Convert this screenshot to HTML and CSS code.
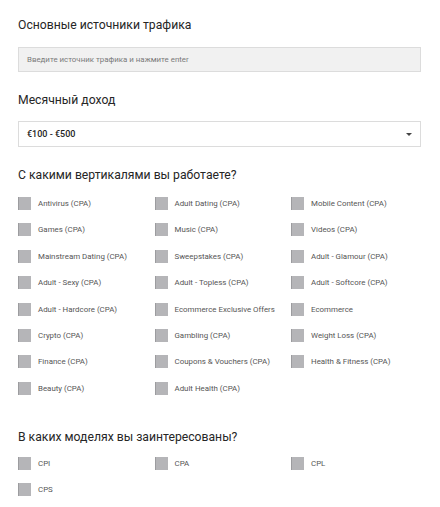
FILE: index.html
```html
<!DOCTYPE html>
<html lang="ru">
<head>
<meta charset="utf-8">
<link rel="stylesheet" href="styles.css">
</head>
<body>
<div class="form">
  <h2 class="title t1">Основные источники трафика</h2>
  <div class="input">Введите источник трафика и нажмите enter</div>

  <h2 class="title t2">Месячный доход</h2>
  <div class="select"><span>€100 - €500</span><span class="arrow"></span></div>

  <h2 class="title t3">С какими вертикалями вы работаете?</h2>
  <div class="grid">
    <label class="opt"><span class="box"></span>Antivirus (CPA)</label>
    <label class="opt"><span class="box"></span>Adult Dating (CPA)</label>
    <label class="opt"><span class="box"></span>Mobile Content (CPA)</label>
    <label class="opt"><span class="box"></span>Games (CPA)</label>
    <label class="opt"><span class="box"></span>Music (CPA)</label>
    <label class="opt"><span class="box"></span>Videos (CPA)</label>
    <label class="opt"><span class="box"></span>Mainstream Dating (CPA)</label>
    <label class="opt"><span class="box"></span>Sweepstakes (CPA)</label>
    <label class="opt"><span class="box"></span>Adult - Glamour (CPA)</label>
    <label class="opt"><span class="box"></span>Adult - Sexy (CPA)</label>
    <label class="opt"><span class="box"></span>Adult - Topless (CPA)</label>
    <label class="opt"><span class="box"></span>Adult - Softcore (CPA)</label>
    <label class="opt"><span class="box"></span>Adult - Hardcore (CPA)</label>
    <label class="opt"><span class="box"></span>Ecommerce Exclusive Offers</label>
    <label class="opt"><span class="box"></span>Ecommerce</label>
    <label class="opt"><span class="box"></span>Crypto (CPA)</label>
    <label class="opt"><span class="box"></span>Gambling (CPA)</label>
    <label class="opt"><span class="box"></span>Weight Loss (CPA)</label>
    <label class="opt"><span class="box"></span>Finance (CPA)</label>
    <label class="opt"><span class="box"></span>Coupons &amp; Vouchers (CPA)</label>
    <label class="opt"><span class="box"></span>Health &amp; Fitness (CPA)</label>
    <label class="opt"><span class="box"></span>Beauty (CPA)</label>
    <label class="opt"><span class="box"></span>Adult Health (CPA)</label>
  </div>

  <h2 class="title t4">В каких моделях вы заинтересованы?</h2>
  <div class="grid">
    <label class="opt"><span class="box"></span>CPI</label>
    <label class="opt"><span class="box"></span>CPA</label>
    <label class="opt"><span class="box"></span>CPL</label>
    <label class="opt"><span class="box"></span>CPS</label>
  </div>
</div>
</body>
</html>
```
FILE: styles.css
```css
html, body {
  margin: 0;
  padding: 0;
  background: #fff;
}
body {
  font-family: Roboto, "Liberation Sans", Arial, sans-serif;
  color: #222;
}
.form {
  padding: 17px 0 0 18px;
  width: 403px;
}
.title {
  margin: 0;
  font-size: 12.2px;
  line-height: 16px;
  font-weight: 400;
  color: #262626;
}
.t1 { margin-bottom: 14px; }
.t2 { margin-top: 20px; margin-bottom: 13px; }
.t3 { margin-top: 20px; margin-bottom: 14px; }
.t4 { margin-top: 34px; margin-bottom: 12px; }

.input {
  box-sizing: border-box;
  height: 25px;
  background: #f1f1f1;
  border: 1px solid #dcdcdc;
  padding: 0 8px;
  font-size: 7.9px;
  line-height: 23px;
  color: #7a7a7a;
}
.select {
  box-sizing: border-box;
  height: 26px;
  background: #fff;
  border: 1px solid #dcdcdc;
  padding: 0 8px 0 8px;
  display: flex;
  align-items: center;
  justify-content: space-between;
  font-size: 9px;
  font-weight: 500;
  color: #1e1e1e;
}
.arrow {
  width: 0;
  height: 0;
  border-left: 3px solid transparent;
  border-right: 3px solid transparent;
  border-top: 3px solid #444;
}
.grid {
  display: grid;
  grid-template-columns: 136.5px 136.5px 130px;
  grid-auto-rows: 13px;
  row-gap: 13.4px;
}
.opt {
  display: flex;
  align-items: center;
  font-size: 7.9px;
  color: #555;
  white-space: nowrap;
}
.box {
  box-sizing: border-box;
  width: 13px;
  height: 13px;
  background: #b5b5b8;
  border-left: 1px solid #9c9c9f;
  margin-right: 7px;
  flex: none;
}
```
